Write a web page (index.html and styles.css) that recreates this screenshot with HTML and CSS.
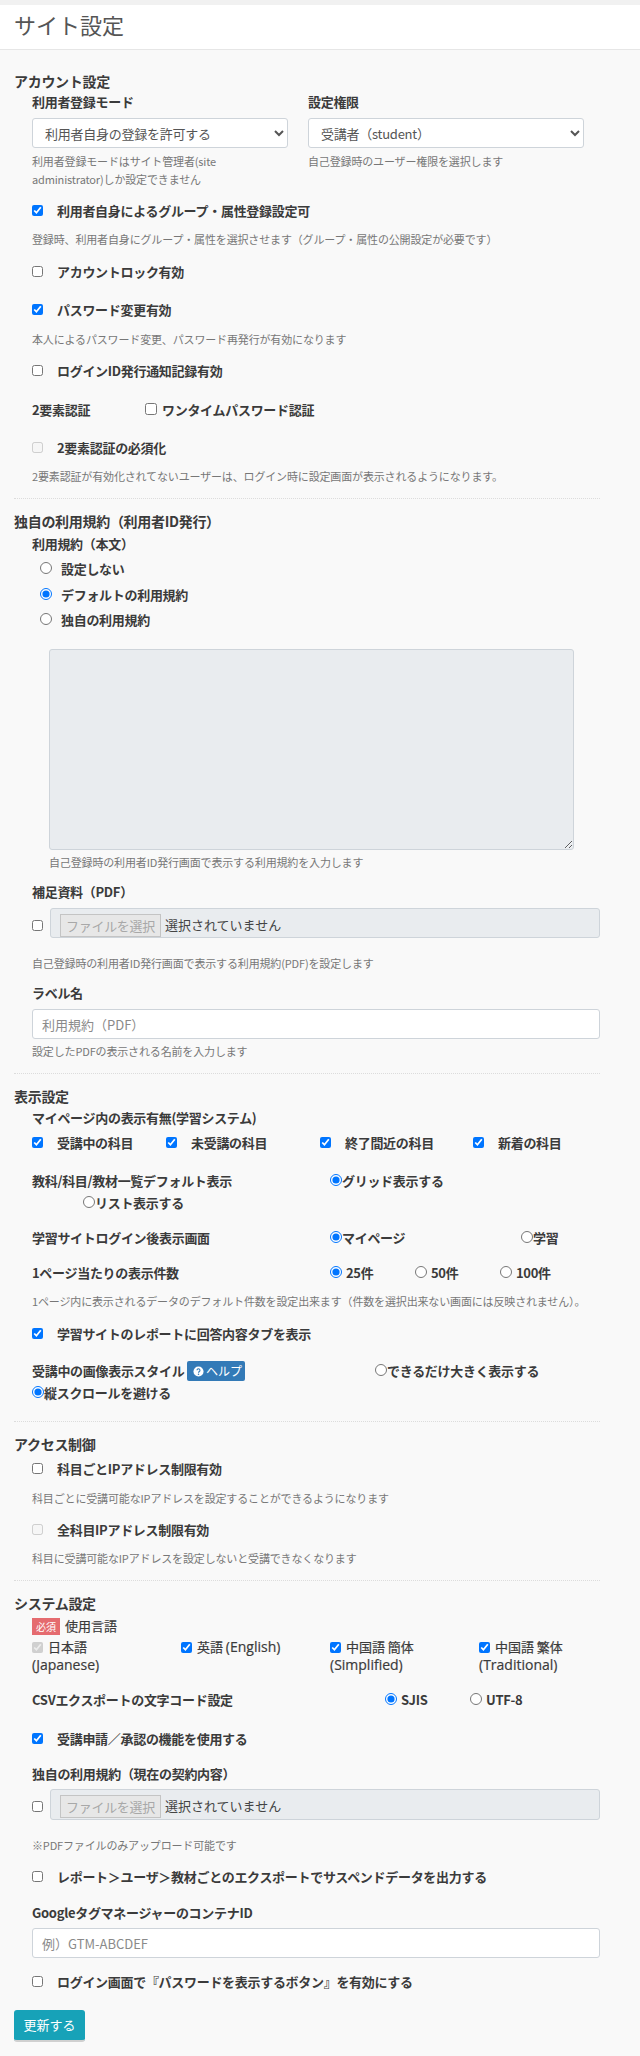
FILE: index.html
```html
<!DOCTYPE html>
<html lang="ja">
<head>
<meta charset="utf-8">
<title>サイト設定</title>
<link rel="stylesheet" href="styles.css">
</head>
<body>
<header class="page-head"><h1>サイト設定</h1></header>
<main class="page-body">

<section class="sec sec-first">
  <h2>アカウント設定</h2>
  <div class="indent">
    <div class="two-col mt1">
      <div class="col-a">
        <div class="lbl">利用者登録モード</div>
        <select class="ctl mt6"><option>利用者自身の登録を許可する</option></select>
        <p class="help mt4">利用者登録モードはサイト管理者(site<br>administrator)しか設定できません</p>
      </div>
      <div class="col-b">
        <div class="lbl">設定権限</div>
        <select class="ctl mt6"><option>受講者（student）</option></select>
        <p class="help mt4">自己登録時のユーザー権限を選択します</p>
      </div>
    </div>
    <label class="chk mt13"><input type="checkbox" checked><span>利用者自身によるグループ・属性登録設定可</span></label>
    <p class="help mt9">登録時、利用者自身にグループ・属性を選択させます（グループ・属性の公開設定が必要です）</p>
    <label class="chk mt14"><input type="checkbox"><span>アカウントロック有効</span></label>
    <label class="chk mt18"><input type="checkbox" checked><span>パスワード変更有効</span></label>
    <p class="help mt10">本人によるパスワード変更、パスワード再発行が有効になります</p>
    <label class="chk mt13"><input type="checkbox"><span>ログインID発行通知記録有効</span></label>
    <div class="line mt19">
      <span class="lbl w113">2要素認証</span>
      <label class="chk tight"><input type="checkbox"><span>ワンタイムパスワード認証</span></label>
    </div>
    <label class="chk mt18"><input type="checkbox" disabled><span>2要素認証の必須化</span></label>
    <p class="help mt9">2要素認証が有効化されてないユーザーは、ログイン時に設定画面が表示されるようになります。</p>
  </div>
</section>

<section class="sec">
  <h2>独自の利用規約（利用者ID発行）</h2>
  <div class="indent">
    <div class="lbl mt3">利用規約（本文）</div>
    <label class="rad radio-in mt5"><input type="radio" name="terms"><span>設定しない</span></label>
    <label class="rad radio-in mt6"><input type="radio" name="terms" checked><span>デフォルトの利用規約</span></label>
    <label class="rad radio-in mt5"><input type="radio" name="terms"><span>独自の利用規約</span></label>
    <textarea class="terms-text mt19" disabled></textarea>
    <p class="help mt3 in17">自己登録時の利用者ID発行画面で表示する利用規約を入力します</p>
    <div class="lbl mt11">補足資料（PDF）</div>
    <div class="file-row mt6">
      <input type="checkbox">
      <div class="file-box"><span class="file-btn">ファイルを選択</span><span class="file-txt">選択されていません</span></div>
    </div>
    <p class="help mt16">自己登録時の利用者ID発行画面で表示する利用規約(PDF)を設定します</p>
    <div class="lbl mt11">ラベル名</div>
    <input class="text-in mt6" type="text" placeholder="利用規約（PDF）">
    <p class="help mt3">設定したPDFの表示される名前を入力します</p>
  </div>
</section>

<section class="sec sec-disp">
  <h2>表示設定</h2>
  <div class="indent">
    <div class="lbl mt2">マイページ内の表示有無(学習システム)</div>
    <div class="four-a mt5">
      <label class="chk"><input type="checkbox" checked><span>受講中の科目</span></label>
      <label class="chk"><input type="checkbox" checked><span>未受講の科目</span></label>
      <label class="chk"><input type="checkbox" checked><span>終了間近の科目</span></label>
      <label class="chk"><input type="checkbox" checked><span>新着の科目</span></label>
    </div>
    <div class="line mt18">
      <span class="lbl w298">教科/科目/教材一覧デフォルト表示</span>
      <label class="rad flush"><input type="radio" name="grid" checked><span>グリッド表示する</span></label>
    </div>
    <label class="rad flush in51 mt2"><input type="radio" name="grid"><span>リスト表示する</span></label>
    <div class="line mt15">
      <span class="lbl w298">学習サイトログイン後表示画面</span>
      <label class="rad flush w191"><input type="radio" name="after" checked><span>マイページ</span></label>
      <label class="rad flush"><input type="radio" name="after"><span>学習</span></label>
    </div>
    <div class="line mt15">
      <span class="lbl w298">1ページ当たりの表示件数</span>
      <label class="rad w85"><input type="radio" name="cnt" checked><span>25件</span></label>
      <label class="rad w85"><input type="radio" name="cnt"><span>50件</span></label>
      <label class="rad"><input type="radio" name="cnt"><span>100件</span></label>
    </div>
    <p class="help mt9">1ページ内に表示されるデータのデフォルト件数を設定出来ます（件数を選択出来ない画面には反映されません）。</p>
    <label class="chk mt14"><input type="checkbox" checked><span>学習サイトのレポートに回答内容タブを表示</span></label>
    <div class="line mt17">
      <span class="lbl w343"><span class="style-name">受講中の画像表示スタイル</span><span class="help-btn"><svg class="help-ico" viewBox="0 0 12 12" aria-hidden="true"><circle cx="6" cy="6" r="5.5" fill="#fff"/><path d="M4.4 4.7a1.6 1.6 0 1 1 2.5 1.3c-.6.4-.9.7-.9 1.3" fill="none" stroke="#337ab7" stroke-width="1.2"/><circle cx="6" cy="9" r=".8" fill="#337ab7"/></svg>ヘルプ</span></span>
      <label class="rad flush"><input type="radio" name="img"><span>できるだけ大きく表示する</span></label>
    </div>
    <label class="rad flush mt2"><input type="radio" name="img" checked><span>縦スクロールを避ける</span></label>
  </div>
</section>

<section class="sec sec-acc">
  <h2>アクセス制御</h2>
  <div class="indent">
    <label class="chk mt5"><input type="checkbox"><span>科目ごとIPアドレス制限有効</span></label>
    <p class="help mt10">科目ごとに受講可能なIPアドレスを設定することができるようになります</p>
    <label class="chk mt13"><input type="checkbox" disabled><span>全科目IPアドレス制限有効</span></label>
    <p class="help mt9">科目に受講可能なIPアドレスを設定しないと受講できなくなります</p>
  </div>
</section>

<section class="sec sec-last">
  <h2>システム設定</h2>
  <div class="indent">
    <div class="lbl-plain mt3"><span class="req">必須</span>使用言語</div>
    <div class="four-b mt2">
      <label class="lang"><input type="checkbox" checked disabled> 日本語<br><span class="latin">(Japanese)</span></label>
      <label class="lang"><input type="checkbox" checked> 英語 <span class="latin">(English)</span></label>
      <label class="lang"><input type="checkbox" checked> 中国語 簡体<br><span class="latin">(Simplified)</span></label>
      <label class="lang"><input type="checkbox" checked> 中国語 繁体<br><span class="latin">(Traditional)</span></label>
    </div>
    <div class="line mt16">
      <span class="lbl w353">CSVエクスポートの文字コード設定</span>
      <label class="rad w85"><input type="radio" name="csv" checked><span>SJIS</span></label>
      <label class="rad"><input type="radio" name="csv"><span>UTF-8</span></label>
    </div>
    <label class="chk mt19"><input type="checkbox" checked><span>受講申請／承認の機能を使用する</span></label>
    <div class="lbl mt15">独自の利用規約（現在の契約内容）</div>
    <div class="file-row mt5">
      <input type="checkbox">
      <div class="file-box file-box-tall"><span class="file-btn">ファイルを選択</span><span class="file-txt">選択されていません</span></div>
    </div>
    <p class="help mt16">※PDFファイルのみアップロード可能です</p>
    <label class="chk mt13"><input type="checkbox"><span>レポート＞ユーザ＞教材ごとのエクスポートでサスペンドデータを出力する</span></label>
    <div class="lbl mt16">GoogleタグマネージャーのコンテナID</div>
    <input class="text-in mt5" type="text" placeholder="例）GTM-ABCDEF">
    <label class="chk mt14"><input type="checkbox"><span>ログイン画面で『パスワードを表示するボタン』を有効にする</span></label>
  </div>
  <button class="submit" type="button">更新する</button>
</section>

</main>
</body>
</html>
```

FILE: styles.css
```css
* { box-sizing: border-box; }
html, body { margin: 0; padding: 0; }
body {
  background: #f9f9f9;
  color: #3b3b3b;
  font-family: "Noto Sans CJK JP", "Noto Sans", sans-serif;
  font-feature-settings: "pkna";
  font-size: 13px;
  line-height: 20px;
  height: 2056px;
  overflow: hidden;
}
.page-head {
  height: 50px;
  background: #fff;
  border-top: 5px solid #f1f1f1;
  border-bottom: 1px solid #e6e6e6;
  padding-left: 14px;
}
.page-head h1 {
  margin: 0;
  font-size: 22px;
  font-weight: 400;
  line-height: 38px;
  color: #555;
}
.page-body { padding: 0 40px 0 14px; }
.sec { padding-top: 12px; padding-bottom: 13px; border-bottom: 1px dotted #dcdcdc; }
.sec-first { padding-top: 21px; }
.sec-disp { padding-bottom: 18px; }
.sec-acc { padding-bottom: 13px; }
.sec-last { border-bottom: 0; }
h2 { margin: 0; font-size: 14px; line-height: 20px; font-weight: 700; color: #3b3b3b; letter-spacing: -.3px; }
.indent { padding-left: 18px; }
.lbl { font-weight: 700; display: block; letter-spacing: -.3px; }
.lbl-plain { font-weight: 400; display: flex; align-items: center; -webkit-text-stroke: .2px; }
.help { margin: 0; font-size: 11px; line-height: 18px; color: #777; letter-spacing: -.15px; }
.two-col { display: flex; gap: 20px; }
.col-a { width: 256px; flex: none; }
.col-b { width: 276px; flex: none; }
.ctl {
  display: block;
  width: 100%;
  height: 30px;
  background: #fff;
  border: 1px solid #ced4da;
  border-radius: 3px;
  padding: 0 8px;
  font: inherit;
  font-size: 13px;
  letter-spacing: -.25px;
  color: #555;
}
.chk, .rad { display: flex; align-items: center; font-weight: 700; line-height: 20px; letter-spacing: -.3px; }
.chk input { margin: 0 14px 2px 0; width: 11px; height: 11px; flex: none; }
.chk.tight input { margin-right: 5px; width: 12px; height: 12px; }
.rad input { margin: 0 4px 2px 0; width: 12px; height: 12px; flex: none; }
.rad.flush input { margin-right: 0; }
.radio-in { padding-left: 8px; }
.radio-in input { margin-right: 9px; }
.line { display: flex; align-items: center; }
.w113 { width: 113px; flex: none; }
.w298 { width: 298px; flex: none; }
.w343 { width: 343px; flex: none; display: flex; align-items: center; }
.w353 { width: 353px; flex: none; }
.w191 { width: 191px; flex: none; }
.w85 { width: 85px; flex: none; }
.style-name { width: 151px; flex: none; white-space: nowrap; }
.in17 { margin-left: 17px; }
.in51 { margin-left: 51px; }
.terms-text {
  display: block;
  width: 525px;
  height: 201px;
  margin-left: 17px;
  background: #e9ecef;
  border: 1px solid #ced4da;
  border-radius: 3px;
}
.file-row { display: flex; align-items: center; gap: 7px; }
.file-row input { margin: 4px 0 0; width: 11px; height: 11px; flex: none; }
.file-box {
  width: 551px;
  height: 30px;
  background: #e9ecef;
  border: 1px solid #ced4da;
  border-radius: 3px;
  padding: 5px 0 0 9px;
  display: flex;
  align-items: flex-start;
}
.file-box-tall { height: 31px; }
.file-btn {
  width: 101px;
  height: 23px;
  background: #e7e7e7;
  border: 1px solid #c4c4c4;
  color: #a8a8a8;
  font-size: 13px;
  line-height: 21px;
  letter-spacing: -.3px;
  text-align: center;
}
.file-txt { margin-left: 4px; font-size: 13px; line-height: 21px; color: #444; }
.text-in {
  display: block;
  width: 568px;
  height: 30px;
  background: #fff;
  border: 1px solid #ced4da;
  border-radius: 3px;
  padding: 0 9px;
  font: inherit;
  font-size: 13px;
}
.text-in::placeholder { color: #8a8a8a; opacity: 1; }
.four-a { display: grid; grid-template-columns: 134px 154px 153px 1fr; }
.four-b { display: grid; grid-template-columns: repeat(4, 149px); }
.lang { display: block; font-size: 13px; line-height: 18px; -webkit-text-stroke: .2px; }
.lang input { margin: 0 2px 2px 0; width: 11px; height: 11px; vertical-align: middle; }
.latin { font-family: "Open Sans", "Noto Sans CJK JP", sans-serif; font-size: 14px; }
.help-btn {
  display: inline-flex;
  align-items: center;
  height: 20px;
  width: 58px;
  margin-left: 4px;
  padding-left: 6px;
  background: #337ab7;
  border-radius: 2px;
  color: #fff;
  font-size: 12px;
  font-weight: 400;
  letter-spacing: 0;
}
.help-ico { width: 11px; height: 11px; margin-right: 2px; }
.req {
  width: 28px;
  height: 17px;
  margin-right: 5px;
  background: #e56b6f;
  color: #fff;
  font-size: 10px;
  line-height: 17px;
  text-align: center;
  -webkit-text-stroke: 0;
}
.submit {
  display: block;
  width: 71px;
  height: 32px;
  margin-top: 18px;
  background: #17a2b8;
  border: 0;
  border-bottom: 2px solid #d0d0d0;
  border-radius: 3px;
  color: #fff;
  font: inherit;
  font-size: 13px;
  padding: 0;
}
.mt1 { margin-top: 1px; }
.mt2 { margin-top: 2px; }
.mt3 { margin-top: 3px; }
.mt4 { margin-top: 4px; }
.mt5 { margin-top: 5px; }
.mt6 { margin-top: 6px; }
.mt9 { margin-top: 9px; }
.mt10 { margin-top: 10px; }
.mt11 { margin-top: 11px; }
.mt13 { margin-top: 13px; }
.mt14 { margin-top: 14px; }
.mt15 { margin-top: 15px; }
.mt16 { margin-top: 16px; }
.mt17 { margin-top: 17px; }
.mt18 { margin-top: 18px; }
.mt19 { margin-top: 19px; }
```
